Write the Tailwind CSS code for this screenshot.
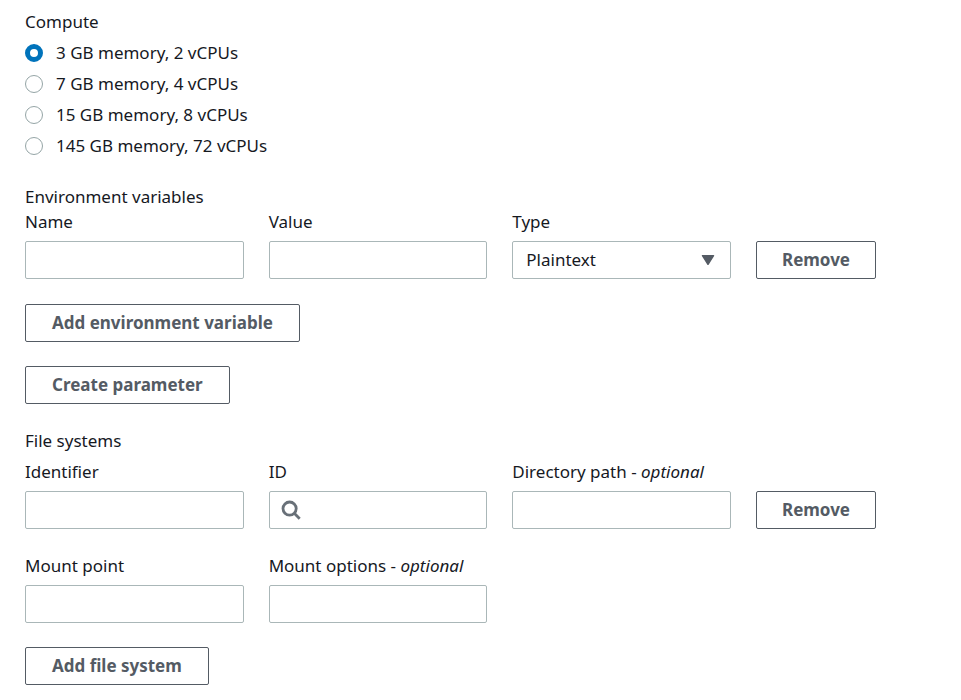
<!DOCTYPE html>
<html lang="en">
<head>
<meta charset="utf-8">
<title>Environment</title>
<script src="https://cdn.jsdelivr.net/npm/@tailwindcss/browser@4"></script>
</head>
<body class="bg-white">
<form class="flex flex-col items-stretch pt-[9px] pl-[25px] pr-[85px] pb-[15px] font-['Noto_Sans',sans-serif] text-[17px] leading-[25px] text-[#16191f]">
  <fieldset>
    <legend>Compute</legend>
    <div class="mt-1.5 flex flex-col items-start gap-1.5">
      <label class="flex items-center gap-[13px]"><input type="radio" name="compute" checked class="size-[18px] appearance-none rounded-full border border-[#95a5a6] bg-white checked:border-[5px] checked:border-[#0073bb]">3 GB memory, 2 vCPUs</label>
      <label class="flex items-center gap-[13px]"><input type="radio" name="compute" class="size-[18px] appearance-none rounded-full border border-[#95a5a6] bg-white checked:border-[5px] checked:border-[#0073bb]">7 GB memory, 4 vCPUs</label>
      <label class="flex items-center gap-[13px]"><input type="radio" name="compute" class="size-[18px] appearance-none rounded-full border border-[#95a5a6] bg-white checked:border-[5px] checked:border-[#0073bb]">15 GB memory, 8 vCPUs</label>
      <label class="flex items-center gap-[13px]"><input type="radio" name="compute" class="size-[18px] appearance-none rounded-full border border-[#95a5a6] bg-white checked:border-[5px] checked:border-[#0073bb]">145 GB memory, 72 vCPUs</label>
    </div>
  </fieldset>

  <fieldset class="mt-[26px]">
    <legend>Environment variables</legend>
    <div class="grid grid-cols-[1fr_1fr_1fr_120px] items-end gap-x-[25px]">
      <div class="flex flex-col gap-[7px]">
        <label for="env-name">Name</label>
        <input id="env-name" type="text" class="h-[38px] w-full rounded-xs border border-[#aab7b8] px-3">
      </div>
      <div class="flex flex-col gap-[7px]">
        <label for="env-value">Value</label>
        <input id="env-value" type="text" class="h-[38px] w-full rounded-xs border border-[#aab7b8] px-3">
      </div>
      <div class="flex flex-col gap-[7px]">
        <label for="env-type">Type</label>
        <div class="relative">
          <select id="env-type" class="block h-[38px] w-full appearance-none rounded-xs border border-[#aab7b8] bg-white pr-10 pb-0.5 pl-[13px]">
            <option>Plaintext</option>
            <option>Parameter</option>
            <option>Secrets Manager</option>
          </select>
          <svg class="pointer-events-none absolute top-[13px] right-4 h-3 w-3.5" viewBox="0 0 14 12" fill="#545b64" stroke="#545b64" stroke-width="1.5" stroke-linejoin="round" aria-hidden="true"><path d="M1.5 1.7h11L7 10.3z"/></svg>
        </div>
      </div>
      <button type="button" class="h-[38px] rounded-xs border border-[#545b64] pb-0.5 font-bold text-[#545b64]">Remove</button>
    </div>
    <div class="mt-[25px] flex flex-col items-start gap-6">
      <button type="button" class="h-[38px] rounded-xs border border-[#545b64] px-[26px] pb-0.5 font-bold text-[#545b64]">Add environment variable</button>
      <button type="button" class="h-[38px] rounded-xs border border-[#545b64] px-[26px] pb-0.5 font-bold text-[#545b64]">Create parameter</button>
    </div>
  </fieldset>

  <fieldset class="mt-6">
    <legend>File systems</legend>
    <div class="mt-1.5 grid grid-cols-[1fr_1fr_1fr_120px] items-end gap-x-[25px] gap-y-6">
      <div class="flex flex-col gap-[7px]">
        <label for="fs-identifier">Identifier</label>
        <input id="fs-identifier" type="text" class="h-[38px] w-full rounded-xs border border-[#aab7b8] px-3">
      </div>
      <div class="flex flex-col gap-[7px]">
        <label for="fs-id">ID</label>
        <div class="relative">
          <input id="fs-id" type="text" class="block h-[38px] w-full rounded-xs border border-[#aab7b8] pr-3 pl-10">
          <svg class="pointer-events-none absolute top-[9px] left-3 size-5" viewBox="0 0 20 20" fill="none" stroke="#687078" stroke-width="2.8" aria-hidden="true"><circle cx="8.6" cy="8.6" r="6.6"/><path d="M13.3 13.3l5.4 5.4"/></svg>
        </div>
      </div>
      <div class="flex flex-col gap-[7px]">
        <label for="fs-path" class="whitespace-nowrap">Directory path - <i>optional</i></label>
        <input id="fs-path" type="text" class="h-[38px] w-full rounded-xs border border-[#aab7b8] px-3">
      </div>
      <button type="button" class="h-[38px] rounded-xs border border-[#545b64] pb-0.5 font-bold text-[#545b64]">Remove</button>
      <div class="flex flex-col gap-[7px]">
        <label for="fs-mount">Mount point</label>
        <input id="fs-mount" type="text" class="h-[38px] w-full rounded-xs border border-[#aab7b8] px-3">
      </div>
      <div class="flex flex-col gap-[7px]">
        <label for="fs-options" class="whitespace-nowrap">Mount options - <i>optional</i></label>
        <input id="fs-options" type="text" class="h-[38px] w-full rounded-xs border border-[#aab7b8] px-3">
      </div>
    </div>
    <button type="button" class="mt-6 h-[38px] rounded-xs border border-[#545b64] px-[26px] pb-0.5 font-bold text-[#545b64]">Add file system</button>
  </fieldset>
</form>
</body>
</html>
